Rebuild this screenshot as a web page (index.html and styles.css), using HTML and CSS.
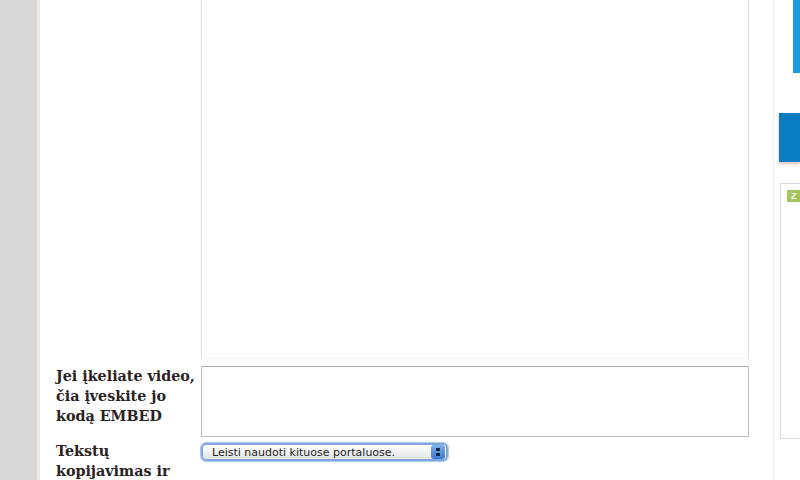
FILE: index.html
```html
<!DOCTYPE html>
<html lang="lt">
<head>
<meta charset="utf-8">
<link rel="stylesheet" href="styles.css">
</head>
<body>
<div class="page">
  <div class="strip"></div>
  <main class="main">
    <div class="form">
      <div class="row row-first">
        <div class="label"></div>
        <div class="field"><textarea class="area area-big"></textarea></div>
      </div>
      <div class="row row-embed">
        <div class="label">Jei įkeliate video, čia įveskite jo kodą EMBED</div>
        <div class="field"><textarea class="area area-small"></textarea></div>
      </div>
      <div class="row row-copy">
        <div class="label">Tekstų kopijavimas ir</div>
        <div class="field">
          <div class="select">
            <span class="select-text">Leisti naudoti kituose portaluose.</span>
            <span class="select-arrows"><i></i><i></i></span>
          </div>
        </div>
      </div>
    </div>
  </main>
  <aside class="side">
    <div class="side-top"></div>
    <div class="side-bar"></div>
    <div class="side-box"><span class="badge">Z</span></div>
  </aside>
</div>
</body>
</html>
```

FILE: styles.css
```css
html, body {
  margin: 0;
  padding: 0;
  background: #ffffff;
  overflow: hidden;
}
.page {
  display: flex;
  width: 800px;
  height: 480px;
}
.strip {
  width: 37px;
  flex: none;
  background: #dad6d4;
  border-right: 3px solid #ebe9e8;
}
.main {
  width: 733px;
  flex: none;
  border-right: 1px solid #ecebef;
  overflow: hidden;
}
.form {
  display: flex;
  flex-direction: column;
}
.row {
  display: flex;
}
.label {
  width: 145px;
  flex: none;
  padding-left: 16px;
  font-family: "DejaVu Serif", "Liberation Serif", serif;
  font-weight: bold;
  font-size: 14.3px;
  line-height: 20px;
  color: #2a2222;
}
.field {
  width: 548px;
  flex: none;
}
.area {
  display: block;
  box-sizing: border-box;
  width: 548px;
  margin: 0;
  padding: 0;
  resize: none;
  background: #fff;
  font: 13px "Liberation Sans", sans-serif;
  outline: none;
}
.area-big {
  height: 359px;
  border: 1px solid #dcdcdc;
  border-top: none;
  border-bottom-color: #f4f4f4;
}
.row-embed {
  margin-top: 7px;
}
.area-small {
  height: 71px;
  border: 1px solid #bdbdbd;
  border-top-color: #a9a9a9;
}
.row-copy {
  margin-top: 5px;
}
.row-copy .label {
  margin-top: -1px;
}
.select {
  box-sizing: border-box;
  width: 247px;
  height: 18px;
  margin-top: 1px;
  border: 2px solid #7fa7d9;
  border-radius: 5px;
  background: linear-gradient(#ffffff, #e3e3e3);
  display: flex;
  align-items: center;
  justify-content: space-between;
  box-shadow: 0 0 1px 1px #a9c5ea;
}
.select-text {
  padding-left: 9px;
  font: 11px "DejaVu Sans", "Liberation Sans", sans-serif;
  color: #1e1e1e;
}
.select-arrows {
  width: 14px;
  height: 14px;
  margin-right: 1px;
  border-radius: 3px;
  background: linear-gradient(#7fb0ea, #3b7ad2);
  display: flex;
  flex-direction: column;
  align-items: center;
  justify-content: center;
  gap: 2px;
}
.select-arrows i {
  width: 4px;
  height: 3px;
  background: #0f1f3a;
  border-radius: 1px;
}
.side {
  flex: 1;
  display: flex;
  flex-direction: column;
  align-items: flex-end;
}
.side-top {
  width: 7px;
  height: 73px;
  background: #1a9bdd;
}
.side-bar {
  width: 21px;
  height: 49px;
  margin-top: 40px;
  background: #0a7dc0;
  box-shadow: 0 2px 3px rgba(150, 90, 60, 0.35);
}
.side-box {
  box-sizing: border-box;
  width: 20px;
  height: 256px;
  margin-top: 21px;
  border: 1px solid #d9dbea;
  border-right: none;
  padding: 6px 0 0 6px;
}
.badge {
  display: block;
  width: 14px;
  height: 12px;
  background: #a3c65a;
  color: #ffffff;
  font: bold 9px/12px "Liberation Sans", sans-serif;
  padding-left: 4px;
  box-sizing: border-box;
}
```
